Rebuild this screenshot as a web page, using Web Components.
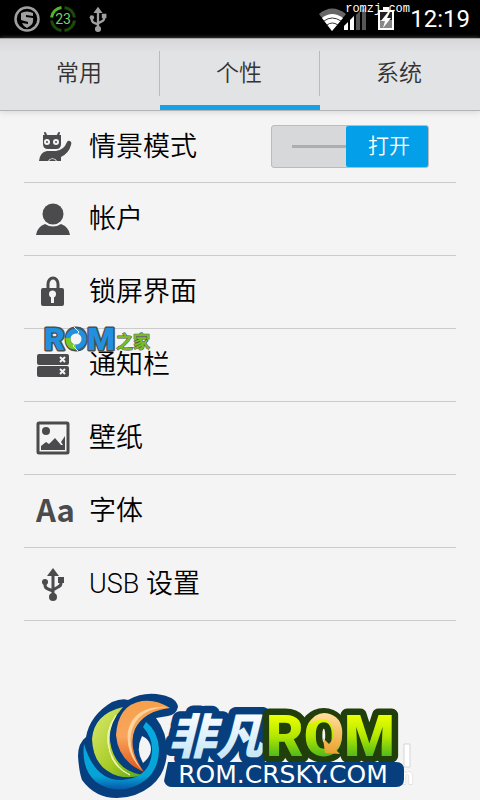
<!DOCTYPE html>
<html lang="zh-CN">
<head>
<meta charset="utf-8">
<meta name="viewport" content="width=device-width, initial-scale=1">
<title>设置</title>
<style>
  html, body {
    margin: 0;
    min-height: 100%;
    background: #f4f4f4;
  }
  body {
    font-family: Roboto, "Noto Sans CJK SC", sans-serif;
  }
</style>
</head>
<body>
<settings-app></settings-app>

<script>
//#region HELPERS
function makeTemplate(html) {
	const template = document.createElement("template");
	template.innerHTML = html;
	return template;
}

class BaseElement extends HTMLElement {
	constructor() {
		super();
		this._shadowRoot = this.attachShadow({mode: "open"});
		this._shadowRoot.appendChild(this.constructor.template.content.cloneNode(true));
	}
}
//#endregion HELPERS

//#region ICONS
const usb = `
  <path d="M16 4v23M8 14v3q0 3 3 4l5 2M24 12v3q0 3-3 4l-5 3" fill="none" stroke="currentColor" stroke-width="3"/>
  <path d="M16 0l6 8H10zM21 9h6v6h-6z" fill="currentColor"/>
  <circle cx="8" cy="14" r="3" fill="currentColor"/>
  <circle cx="16" cy="29" r="4" fill="currentColor"/>`;

const icons = {
	usb: `<svg viewBox="-1 -1 34 34">${usb}</svg>`,
	robot: `<svg viewBox="0 0 34 34">
    <path d="M9 3l2 4M23 3l-2 4" stroke="currentColor" stroke-width="2" stroke-linecap="round"/>
    <path d="M7 5h18v9q0 5-5 5h-8q-5 0-5-5z" fill="currentColor"/>
    <circle cx="11" cy="12" r="3" fill="#f4f4f4"/><circle cx="20" cy="12" r="3" fill="#f4f4f4"/>
    <circle cx="11" cy="12" r="1" fill="currentColor"/><circle cx="20" cy="12" r="1" fill="currentColor"/>
    <path d="M3 31q1-9 8-10h9q8-1 11-9 1-2 3-1 2 1 1 4-2 8-10 12v4h-4a5 5 0 0 0-9 0z" fill="currentColor"/>
    <path d="M13 31a4 4 0 0 1 7 0z" fill="currentColor"/>
  </svg>`,
	user: `<svg viewBox="0 0 34 34">
    <circle cx="17" cy="12" r="10.500" fill="currentColor"/>
    <path d="M0 33q1-8 9-11 8 5 16 0 8 3 9 11z" fill="currentColor"/>
  </svg>`,
	lock: `<svg viewBox="0 0 34 34">
    <path d="M12 14V9a5 6 0 0 1 10 0v5" fill="none" stroke="currentColor" stroke-width="3"/>
    <rect x="5" y="13" width="23" height="18" rx="2" fill="currentColor"/>
    <circle cx="16.500" cy="19" r="3.500" fill="#f4f4f4"/><path d="M15 20h3v8h-3z" fill="#f4f4f4"/>
  </svg>`,
	bars: `<svg viewBox="0 0 34 34">
    <rect x="1" y="6" width="32" height="11" rx="2" fill="currentColor"/>
    <rect x="1" y="18" width="32" height="11" rx="2" fill="currentColor"/>
    <path d="M24 9l5 5m0-5l-5 5M24 21l5 5m0-5l-5 5" stroke="#f4f4f4" stroke-width="2"/>
  </svg>`,
	picture: `<svg viewBox="0 0 34 34">
    <rect x="2" y="2" width="30" height="30" rx="1" fill="none" stroke="currentColor" stroke-width="3"/>
    <circle cx="10" cy="10" r="4" fill="currentColor"/>
    <path d="M5 29v-4l5-4 3 2 6-6 6 7h2l-2-3 4-6v14z" fill="currentColor"/>
  </svg>`,
	font: `<svg viewBox="0 0 34 34"><text x="0" y="28" font-family="Noto Sans CJK SC, sans-serif" font-size="31" font-weight="700" fill="currentColor">Aa</text></svg>`
};
//#endregion ICONS

//#region STATUS BAR
window.customElements.define("status-bar", class extends BaseElement {
	static template = makeTemplate(/* html */ `
<style>
  :host {
    display: flex;
    align-items: center;
    justify-content: space-between;
    height: 38px;
    padding: 0 10px 0 14px;
    background: #000;
    color: #fff;
  }
  .group { display: flex; align-items: center; }
  .left { gap: 10px; color: #a0a0a0; }
  .right { gap: 10px; }
  svg { display: block; }
  time { font-size: 24px; line-height: 38px; margin-left: 6px; }
</style>
<div class="group left">
  <svg width="26" height="26" viewBox="0 0 26 26">
    <circle cx="13" cy="13" r="11.500" fill="none" stroke="currentColor" stroke-width="2.500"/>
    <path d="M7 7q6-3 12 0v3l-7-1v2l7 1q1 5-3 8l-3 2q-4-2-5-5l6 1v-2l-7-2z" fill="currentColor"/>
  </svg>
  <svg width="26" height="26" viewBox="0 0 26 26">
    <g fill="none" stroke-width="3">
      <path d="M14.500 1.500a11.500 11.500 0 0 1 10 10M24.500 14.500a11.500 11.500 0 0 1-10 10M11.500 24.500a11.500 11.500 0 0 1-10-10" stroke="#1c4a08"/>
      <path d="M1.500 11.500a11.500 11.500 0 0 1 10-10" stroke="#55b524"/>
    </g>
    <text x="13" y="18" text-anchor="middle" font-size="14" fill="#75cf60">23</text>
  </svg>
  <svg width="24" height="26" viewBox="2 -1 28 34">${usb}</svg>
</div>
<div class="group right">
  <svg width="49" height="24" viewBox="0 0 49 24">
    <path d="M0 7q13-11 27 0L13 24z" fill="#666"/>
    <path d="M3 11q10-8 21 0L13 24z" fill="#fff"/>
    <path d="M5 14q8-6 17 0M8 18q5-4 11 0" fill="none" stroke="#333"/>
    <path d="M25 23v-4l4-4v8zM31 13l4-4v14h-4z" fill="#fff"/>
    <path d="M37 8l4-4v19h-4zM43 3l4-3v23h-4z" fill="#555"/>
  </svg>
  <svg width="16" height="24" viewBox="0 0 16 24">
    <path d="M5 0h6v3h5v20H0V3h5z" fill="#fff"/>
    <path d="M2 5h12v16H2z" fill="#222"/><path d="M2 13h12v8H2z" fill="#888"/>
    <path d="M10 5l-7 9h4l-2 7 8-10H9l3-6z" fill="#fff"/>
  </svg>
  <time>12:19</time>
</div>
`);
});
//#endregion STATUS BAR

//#region TABS
window.customElements.define("tab-bar", class extends BaseElement {
	static template = makeTemplate(/* html */ `
<style>
  :host {
    display: flex;
    height: 73px;
    box-sizing: border-box;
    border-top: 1px solid #a5a5a5;
    border-bottom: 1px solid #b4b4b6;
    background: linear-gradient(#d7d7d9, #e2e3e5 14px);
    box-shadow: 0 2px 5px #ddd;
  }
</style>
<slot></slot>
`);
});

window.customElements.define("tab-item", class extends BaseElement {
	static template = makeTemplate(/* html */ `
<style>
  :host { display: flex; flex: 1; align-items: stretch; }
  button {
    flex: 1;
    padding: 4px 2px 0 0;
    border: 0;
    border-bottom: 5px solid transparent;
    background: linear-gradient(#bbbbbd, #bbbbbd) right 12px / 1px 45px no-repeat;
    color: #333;
    font: inherit;
    font-size: 23px;
    font-weight: 350;
    line-height: 34px;
  }
  :host(:last-child) button { background: none; }
  :host([selected]) button { border-bottom-color: #15a2e6; }
</style>
<button type="button" role="tab"><slot></slot></button>
`);
	connectedCallback() {
		this._shadowRoot.querySelector("button").setAttribute("aria-selected", this.hasAttribute("selected"));
	}
});
//#endregion TABS

//#region ROWS
window.customElements.define("setting-icon", class extends BaseElement {
	static template = makeTemplate(/* html */ `
<style>
  :host { display: block; width: 34px; height: 34px; color: #4b4b4d; }
  svg { display: block; width: 34px; height: 34px; overflow: visible; }
</style>
<span></span>
`);
	connectedCallback() {
		this._shadowRoot.querySelector("span").innerHTML = icons[this.getAttribute("name")];
	}
});

window.customElements.define("setting-row", class extends BaseElement {
	static template = makeTemplate(/* html */ `
<style>
  :host {
    display: flex;
    align-items: center;
    min-height: 72px;
    margin: 0 24px;
    padding: 0 27px 0 12px;
    border-bottom: 1px solid #cbcbcb;
  }
  :host(:first-child) { min-height: 71px; }
  a {
    display: flex;
    flex: 1;
    align-items: center;
    gap: 19px;
    color: #000;
    font-size: 27px;
    font-weight: 350;
    line-height: 36px;
    text-decoration: none;
  }
</style>
<a href="#"><slot name="icon"></slot><span><slot></slot></span></a>
<slot name="control"></slot>
`);
});

window.customElements.define("toggle-switch", class extends BaseElement {
	static template = makeTemplate(/* html */ `
<style>
  :host { display: block; }
  label {
    display: flex;
    width: 156px;
    height: 41px;
    border: 1px solid #bbb;
    border-radius: 3px;
    background: #d6d8da;
    align-items: center;
  }
  input {
    appearance: none;
    flex: 1;
    height: 3px;
    margin: 0 0 0 20px;
    background: #acafb1;
  }
  span {
    width: 82px;
    border-radius: 2px;
    background: #03a0e9;
    color: #fff;
    font-size: 21px;
    font-weight: 350;
    line-height: 41px;
    text-align: center;
    text-indent: 4px;
  }
</style>
<label><input type="checkbox" role="switch" checked><span><slot></slot></span></label>
`);
});
//#endregion ROWS

//#region WATERMARKS
window.customElements.define("site-mark", class extends BaseElement {
	static template = makeTemplate(/* html */ `
<style>
  :host { display: block; color: #fff; font: 12px/14px "Liberation Mono", monospace; }
</style>
<slot></slot>
`);
});

window.customElements.define("rom-home-logo", class extends BaseElement {
	static template = makeTemplate(/* html */ `
<style>
  :host { display: block; }
  svg { display: block; overflow: visible; }
  text { paint-order: stroke; stroke-linejoin: round; }
</style>
<svg width="110" height="40" viewBox="0 0 110 40">
  <text x="1" y="26" font-size="32" font-weight="900" fill="#2190df" stroke="#4b5153" stroke-width="3">ROM</text>
  <circle cx="33" cy="15" r="11" fill="#4b5153"/>
  <circle cx="33" cy="15" r="8" fill="#f4f4f4" stroke="#2190df" stroke-width="5"/>
  <path d="M25 14q0 9 8 9" fill="none" stroke="#75c928" stroke-width="5"/>
  <path d="M31 3l5 5-4 5M35 27l-5-5 4-5" fill="none" stroke="#f4f4f4"/>
  <text x="73" y="24" font-size="17" font-weight="700" fill="#79bd22" stroke="#4b5153" stroke-width="1">之家</text>
</svg>
`);
});

window.customElements.define("crsky-logo", class extends BaseElement {
	static template = makeTemplate(/* html */ `
<style>
  :host { display: block; }
  svg { display: block; }
  text { paint-order: stroke; stroke-linejoin: round; }
</style>
<svg width="344" height="108" viewBox="0 0 344 108">
  <defs>
    <linearGradient id="green" x2="0" y2="1"><stop offset=".2" stop-color="#eaff00"/><stop offset=".5" stop-color="#b4e800"/><stop offset=".8" stop-color="#4fb91b"/></linearGradient>
    <linearGradient id="leaf" x2="1" y2="1"><stop offset="0" stop-color="#ddeb72"/><stop offset=".6" stop-color="#a6cb24"/><stop offset="1" stop-color="#57a420"/></linearGradient>
    <linearGradient id="orange" x2="0" y2="1"><stop offset="0" stop-color="#f6a04c"/><stop offset=".5" stop-color="#f9a55d"/><stop offset="1" stop-color="#df5415"/></linearGradient>
    <linearGradient id="gold" x2="0" y2="1"><stop offset="0" stop-color="#ffe09b"/><stop offset="1" stop-color="#e9a02e"/></linearGradient>
    <linearGradient id="sea" x2="0" y2="1"><stop offset="0" stop-color="#08aae0"/><stop offset=".8" stop-color="#06a4d5"/><stop offset="1" stop-color="#0755a7"/></linearGradient>
    <linearGradient id="ice" x2="0" y2="1"><stop offset="0" stop-color="#fff"/><stop offset="1" stop-color="#bde2f7"/></linearGradient>
  </defs>
  <g fill="#fff" stroke="#d5d5d5">
    <path d="M326 52h6v23h-6z"/>
    <text x="323" y="92" font-size="22" font-weight="700">n</text>
  </g>
  <!-- swirl -->
  <path d="M0 64Q0 51 8 45 12 23 34 10 44 6 50 8 66-1 84 3q15 3 16 12-2 8-10 9l-12 2q11 14 11 34-1 22-16 34-15 12-34 12-22 0-35-18Q1 80 0 64z" fill="#073e7d"/>
  <path d="M6 52Q3 77 18 90q17 12 37 5 26-10 26-38-1-18-13-27l-3 5q10 11 9 25-2 26-30 28Q17 89 6 52z" fill="url(#sea)"/>
  <path d="M45 15Q16 22 14 47q1 29 26 37 12 3 24-1-28-5-32-34-2-17 13-34z" fill="url(#leaf)"/>
  <path d="M38 23q-13 18-6 37 7 17 20 23-17-8-20-23-5-19 6-37z" fill="#f0f5b5" stroke="#f0f5b5"/>
  <path d="M92 16Q78 7 64 9 40 13 38 43q2 26 28 37-17-24-9-43 9-18 35-21z" fill="url(#orange)"/>
  <path d="M91 15Q59 16 53 41q-3 20 12 38-18-17-15-40Q56 13 91 15z" fill="#ffd39d"/>
  <path d="M64 44q-7 14 1 27 12-10 6-21-2-4-7-6z" fill="#f4f4f4"/>
  <!-- word marks -->
  <text x="90" y="62" font-size="48" font-weight="900" font-style="italic" fill="url(#ice)" stroke="#073e7d" stroke-width="15">非凡</text>
  <text x="188" y="64" font-size="58" font-weight="900" fill="url(#green)" stroke="#213f0b" stroke-width="13">ROM</text>
  <path d="M231 32q7-14 21-10 14 5 12 23-1 9-6 13l4 4-15-1-2-15 6 6q6-5 4-15-4-13-15-9-4 2-9 4z" fill="url(#gold)"/>
  <path d="M90 70h228q8 0 8 8v9q0 8-8 8H94q-6 0-8-6z" fill="#073e7d"/>
  <text x="205" y="91" text-anchor="middle" font-family="DejaVu Sans, sans-serif" font-size="25" fill="#fff">ROM.CRSKY.COM</text>
</svg>
`);
});
//#endregion WATERMARKS

//#region APP
window.customElements.define("settings-app", class extends BaseElement {
	static template = makeTemplate(/* html */ `
<style>
  :host { display: block; position: relative; min-height: 100vh; }
  main { display: block; }
  /* marks float over the settings */
  site-mark, rom-home-logo, crsky-logo { position: absolute; pointer-events: none; }
  site-mark { top: 2px; right: 70px; }
  rom-home-logo { top: 324px; left: 43px; }
  crsky-logo { bottom: 0; left: 50%; margin-left: -162px; }
</style>
<status-bar></status-bar>
<tab-bar role="tablist">
  <tab-item>常用</tab-item>
  <tab-item selected>个性</tab-item>
  <tab-item>系统</tab-item>
</tab-bar>
<main>
  <setting-row><setting-icon slot="icon" name="robot"></setting-icon>情景模式<toggle-switch slot="control">打开</toggle-switch></setting-row>
  <setting-row><setting-icon slot="icon" name="user"></setting-icon>帐户</setting-row>
  <setting-row><setting-icon slot="icon" name="lock"></setting-icon>锁屏界面</setting-row>
  <setting-row><setting-icon slot="icon" name="bars"></setting-icon>通知栏</setting-row>
  <setting-row><setting-icon slot="icon" name="picture"></setting-icon>壁纸</setting-row>
  <setting-row><setting-icon slot="icon" name="font"></setting-icon>字体</setting-row>
  <setting-row><setting-icon slot="icon" name="usb"></setting-icon>USB 设置</setting-row>
</main>
<site-mark>romzj.com</site-mark>
<rom-home-logo></rom-home-logo>
<crsky-logo></crsky-logo>
`);
});
//#endregion APP
</script>
</body>
</html>
